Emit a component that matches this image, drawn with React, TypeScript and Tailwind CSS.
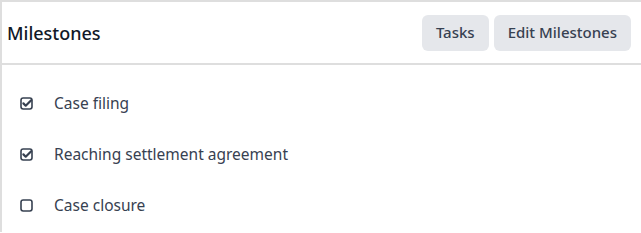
const milestones = [
  { id: 1, title: 'Case filing', done: true },
  { id: 2, title: 'Reaching settlement agreement', done: true },
  { id: 3, title: 'Case closure', done: false },
]

function CheckIcon({ done }: { done: boolean }) {
  return (
    <svg viewBox="0 0 13 13" className="h-[13px] w-[13px] shrink-0 text-[#374151]" fill="none">
      <rect x="1" y="1" width="11" height="11" rx="2.2" stroke="currentColor" strokeWidth="1.6" />
      {done && (
        <path
          d="M3.4 6.4 L5.7 8.7 L11.2 3.2"
          stroke="currentColor"
          strokeWidth="2.2"
          strokeLinecap="round"
          strokeLinejoin="round"
        />
      )}
    </svg>
  )
}

export default function App() {
  return (
    <div className="w-[660px] bg-white font-['Noto_Sans',sans-serif] text-[#1f2937]">
      <div className="border-l-2 border-t-2 border-[#dedede]">
        <div className="flex h-[63px] items-center justify-between border-b-2 border-[#dedede] pl-[5px] pr-[29px]">
          <h2 className="pt-[2px] text-[18px] font-medium text-[#111827]">Milestones</h2>
          <div className="flex gap-[5px]">
            <button className="h-9 rounded-md bg-[#e5e7eb] px-[14px] text-[15px] font-medium text-[#374151]">
              Tasks
            </button>
            <button className="h-9 rounded-md bg-[#e5e7eb] px-[14px] text-[15px] font-medium text-[#374151]">
              Edit Milestones
            </button>
          </div>
        </div>
        <ul className="flex flex-col pt-[14px] pl-[18px]">
          {milestones.map((m) => (
            <li key={m.id} className="flex h-[51px] items-center gap-[21px] pb-[2px] text-[15.5px] text-[#374151]">
              <CheckIcon done={m.done} />
              <span>{m.title}</span>
            </li>
          ))}
        </ul>
      </div>
    </div>
  )
}
